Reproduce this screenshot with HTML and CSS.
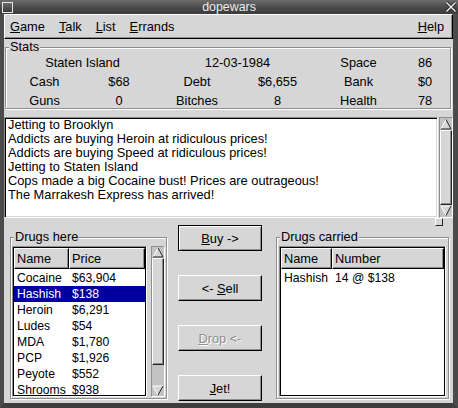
FILE: index.html
```html
<!DOCTYPE html>
<html>
<head>
<meta charset="utf-8">
<title>dopewars</title>
<link rel="stylesheet" href="styles.css">
</head>
<body>
<div class="window">
  <div class="titlebar">
    <span class="wm-icon"></span>
    <span class="title">dopewars</span>
    <svg class="wm-close" width="12" height="12" viewBox="0 0 12 12">
      <path d="M1.5 1.5 L10.5 10.5 M10.5 1.5 L1.5 10.5" stroke="#2a2a2a" stroke-width="3.2" fill="none"/>
      <path d="M1.5 1.5 L10.5 10.5 M10.5 1.5 L1.5 10.5" stroke="#f4f4f4" stroke-width="1.4" fill="none"/>
    </svg>
  </div>
  <div class="client">
    <div class="menubar">
      <span class="menu"><u>G</u>ame</span>
      <span class="menu"><u>T</u>alk</span>
      <span class="menu"><u>L</u>ist</span>
      <span class="menu"><u>E</u>rrands</span>
      <span class="menu help"><u>H</u>elp</span>
    </div>

    <div class="frame stats">
      <span class="frame-label">Stats</span>
      <div class="stats-grid">
        <span class="span2">Staten Island</span><span class="span2">12-03-1984</span><span>Space</span><span>86</span>
        <span>Cash</span><span>$68</span><span>Debt</span><span>$6,655</span><span>Bank</span><span>$0</span>
        <span>Guns</span><span>0</span><span>Bitches</span><span>8</span><span>Health</span><span>78</span>
      </div>
    </div>

    <div class="messages">
      <div class="textview">
        <div>Jetting to Brooklyn</div>
        <div>Addicts are buying Heroin at ridiculous prices!</div>
        <div>Addicts are buying Speed at ridiculous prices!</div>
        <div>Jetting to Staten Island</div>
        <div>Cops made a big Cocaine bust! Prices are outrageous!</div>
        <div>The Marrakesh Express has arrived!</div>
      </div>
      <div class="vscroll tall">
        <span class="arrow"><svg width="12" height="12" viewBox="0 0 12 12"><polygon points="6,1.5 1,11 11,11" fill="#d6d6d6"/><path d="M1 11 L6 1.5" stroke="#fff" fill="none"/><path d="M6 1.5 L11 11 L1 11" stroke="#222" fill="none"/></svg></span>
        <span class="thumb"></span>
        <span class="arrow"><svg width="12" height="12" viewBox="0 0 12 12"><polygon points="1,1 11,1 6,10.5" fill="#d6d6d6"/><path d="M6 10.5 L1 1 L11 1" stroke="#fff" fill="none"/><path d="M11 1 L6 10.5" stroke="#222" fill="none"/></svg></span>
      </div>
    </div>

    <div class="pane-sep"><span class="pane-handle"></span></div>

    <div class="bottom">
      <div class="frame drugs-here">
        <span class="frame-label">Drugs here</span>
        <div class="clist here">
          <div class="clist-head"><span class="hcell c1">Name</span><span class="hcell c2">Price</span></div>
          <div class="row"><span class="c1">Cocaine</span><span class="c2">$63,904</span></div>
          <div class="row selected"><span class="c1">Hashish</span><span class="c2">$138</span></div>
          <div class="row"><span class="c1">Heroin</span><span class="c2">$6,291</span></div>
          <div class="row"><span class="c1">Ludes</span><span class="c2">$54</span></div>
          <div class="row"><span class="c1">MDA</span><span class="c2">$1,780</span></div>
          <div class="row"><span class="c1">PCP</span><span class="c2">$1,926</span></div>
          <div class="row"><span class="c1">Peyote</span><span class="c2">$552</span></div>
          <div class="row"><span class="c1">Shrooms</span><span class="c2">$938</span></div>
        </div>
        <div class="vscroll short">
          <span class="arrow"><svg width="12" height="11" viewBox="0 0 12 11"><polygon points="6,1 1,10 11,10" fill="#d6d6d6"/><path d="M1 10 L6 1" stroke="#fff" fill="none"/><path d="M6 1 L11 10 L1 10" stroke="#222" fill="none"/></svg></span>
          <span class="thumb list-thumb"></span>
          <span class="trough-rest"></span>
          <span class="arrow"><svg width="12" height="11" viewBox="0 0 12 11"><polygon points="1,1 11,1 6,10" fill="#d6d6d6"/><path d="M6 10 L1 1 L11 1" stroke="#fff" fill="none"/><path d="M11 1 L6 10" stroke="#222" fill="none"/></svg></span>
        </div>
      </div>

      <div class="buttons">
        <span class="btn default"><span><u>B</u>uy -&gt;</span></span>
        <span class="btn"><span>&lt;- <u>S</u>ell</span></span>
        <span class="btn disabled"><span><u>D</u>rop &lt;-</span></span>
        <span class="btn"><span><u>J</u>et!</span></span>
      </div>

      <div class="frame drugs-carried">
        <span class="frame-label">Drugs carried</span>
        <div class="clist carried">
          <div class="clist-head"><span class="hcell c1">Name</span><span class="hcell c2">Number</span></div>
          <div class="row"><span class="c1">Hashish</span><span class="c2">14 @ $138</span></div>
        </div>
      </div>
    </div>
  </div>
</div>
</body>
</html>
```

FILE: styles.css
```css
* { box-sizing: border-box; }
html, body { margin: 0; padding: 0; }
body {
  width: 458px;
  height: 408px;
  overflow: hidden;
  background: #4b4b4b;
  font-family: "Liberation Sans", Arial, sans-serif;
  font-size: 12.8px;
  color: #000;
}
u { text-decoration: underline; text-decoration-thickness: 1px; }

.window { width: 458px; height: 408px; display: flex; flex-direction: column; }

.titlebar {
  height: 14px;
  flex: none;
  display: flex;
  align-items: center;
  background: linear-gradient(#6c6c6c, #474747 60%, #3c3c3c);
  color: #ececec;
}
.wm-icon {
  width: 11px;
  height: 11px;
  margin-left: 2px;
  border: 1px solid #e6e6e6;
  background: linear-gradient(#6a6a6a, #3a3a3a);
  flex: none;
}
.title { flex: 1; text-align: center; line-height: 14px; font-size: 12.4px; }
.wm-close { flex: none; margin-right: 1px; }

.client {
  flex: 1;
  display: flex;
  flex-direction: column;
  background: #d6d6d6;
  border-left: 4px solid #4b4b4b;
  border-right: 5px solid #4b4b4b;
  border-bottom: 5px solid #3e3e3e;
  min-height: 0;
}

.menubar {
  height: 25px;
  flex: none;
  display: flex;
  align-items: center;
  gap: 14px;
  padding: 0 8px 0 5px;
  border: 1px solid;
  border-color: #fff #000 #000 #fff;
  box-shadow: inset -1px -1px 0 #8e8e8e;
}
.help { margin-left: auto; }

.frame {
  position: relative;
  border: 1px solid #8e8e8e;
  box-shadow: inset 1px 1px 0 #fff, 1px 1px 0 #fff;
}
.frame-label {
  position: absolute;
  top: -8px;
  left: 3px;
  padding: 0 1px;
  line-height: 14px;
  background: #d6d6d6;
  white-space: nowrap;
}

.stats { flex: none; margin: 8px 2px 0 1px; height: 62px; }
.stats-grid {
  display: grid;
  grid-template-columns: 73px 76px 80px 81px 81px 52px;
  grid-template-rows: 19px 19px 17px;
  padding: 5px 0 0 2px;
  line-height: 19px;
  text-align: center;
  white-space: nowrap;
}
.span2 { grid-column: span 2; }

.messages { flex: none; display: flex; margin-top: 8px; height: 101px; }
.textview {
  flex: 1;
  margin-right: 1px;
  background: #fff;
  border: 1px solid;
  border-color: #8e8e8e #fff #fff #8e8e8e;
  box-shadow: inset 1px 1px 0 #000, inset -1px -1px 0 #d6d6d6;
  padding: 0 3px;
  line-height: 14px;
  white-space: nowrap;
  overflow: hidden;
}

.vscroll {
  width: 14px;
  flex: none;
  display: flex;
  flex-direction: column;
  background: #c3c3c3;
  border: 1px solid;
  border-color: #8e8e8e #fff #fff #8e8e8e;
}
.vscroll.tall { height: 101px; }
.vscroll.short { height: 151px; }
.arrow { flex: none; display: block; line-height: 0; }
.thumb {
  flex: 1;
  background: #d6d6d6;
  border: 1px solid;
  border-color: #fff #222 #222 #fff;
  box-shadow: inset -1px -1px 0 #8e8e8e;
}
.list-thumb { flex: none; height: 107px; }
.trough-rest { flex: 1; }

.pane-sep { flex: none; height: 7px; display: flex; justify-content: flex-end; padding-right: 10px; }
.pane-handle {
  width: 8px;
  height: 8px;
  background: #d6d6d6;
  border: 1px solid;
  border-color: #fff #222 #222 #fff;
}

.bottom { flex: 1; display: flex; align-items: flex-start; padding-left: 6px; }

.drugs-here {
  flex: none;
  margin-top: 12px;
  width: 157px;
  height: 162px;
  display: flex;
  align-items: flex-start;
  gap: 4px;
  padding: 8px 0 0 1px;
}
.drugs-carried {
  flex: none;
  margin: 12px 0 0 14px;
  width: 173px;
  height: 162px;
  padding: 8px 0 0 2px;
}

.clist {
  flex: none;
  height: 151px;
  background: #fff;
  border: 1px solid;
  border-color: #8e8e8e #fff #fff #8e8e8e;
  box-shadow: inset 0 0 0 1px #000;
  padding: 1px;
  overflow: hidden;
}
.clist.here { width: 135px; }
.clist.carried { width: 167px; }

.clist-head { display: flex; height: 21px; margin-bottom: 1px; background: #d6d6d6; }
.hcell {
  height: 21px;
  line-height: 19px;
  padding-left: 2px;
  border: 1px solid;
  border-color: #fff #000 #000 #fff;
  box-shadow: inset -1px -1px 0 #8e8e8e;
  white-space: nowrap;
}
.row { display: flex; height: 16px; line-height: 16px; font-size: 12.2px; white-space: nowrap; }
.row span { padding-left: 3px; }
.c2 { flex: 1; }
.here .c1 { width: 55px; flex: none; }
.carried .c1 { width: 51px; flex: none; }
.row.selected { background: #00009c; color: #fff; }

.buttons {
  flex: none;
  margin-left: 11px;
  width: 84px;
  display: flex;
  flex-direction: column;
  gap: 24px;
}
.btn {
  height: 26px;
  display: flex;
  align-items: center;
  justify-content: center;
  background: #d6d6d6;
  border: 1px solid;
  border-color: #fff #000 #000 #fff;
  box-shadow: inset -1px -1px 0 #8e8e8e;
  white-space: nowrap;
}
.btn.default {
  border-color: #000;
  box-shadow: inset 1px 1px 0 #fff, inset -1px -1px 0 #8e8e8e;
}
.btn.disabled { color: #8e8e8e; text-shadow: 1px 1px 0 #fff; }
```
